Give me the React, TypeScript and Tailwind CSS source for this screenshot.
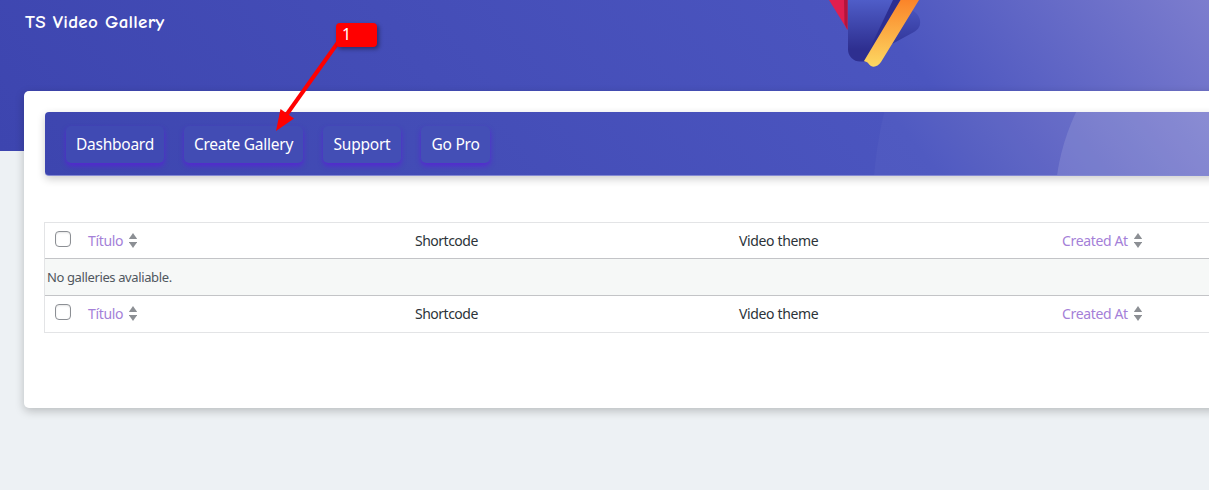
import React, { useState } from 'react';

const navItems = [
  { label: 'Dashboard', width: 'w-[98px]', fill: 'bg-[#404ab3]' },
  { label: 'Create Gallery', width: 'w-[119px]', fill: 'bg-[#424cb4]' },
  { label: 'Support', width: 'w-[78px]', fill: 'bg-[#434eb5]' },
  { label: 'Go Pro', width: 'w-[69px]', fill: 'bg-[#444fb6]' },
];

const SortIcon: React.FC = () => (
  <svg className="ml-[6px] shrink-0" width="8" height="15" viewBox="0 0 8 15" fill="#8c8f94">
    <path d="M4 0L8.200 6H-0.200Z" />
    <path d="M-0.200 9H8.200L4 15Z" />
  </svg>
);

const Logo: React.FC = () => (
  <svg className="absolute left-[820px] top-0" width="110" height="75" viewBox="0 0 110 75">
    <defs>
      <linearGradient id="body" x1="0" y1="0" x2="0" y2="1">
        <stop offset="0" stopColor="#4f5dc8" />
        <stop offset="0.8" stopColor="#2e2f90" />
      </linearGradient>
      <linearGradient id="wing" x1="0" y1="0" x2="0" y2="1">
        <stop offset="0" stopColor="#4853bc" />
        <stop offset="1" stopColor="#32379b" />
      </linearGradient>
      <linearGradient id="bar" x1="0" y1="0" x2="0" y2="1">
        <stop offset="0" stopColor="#fb8429" />
        <stop offset="1" stopColor="#fcd862" />
      </linearGradient>
    </defs>
    <path d="M9 0H27.5V30Z" fill="#e01f4f" />
    <path d="M24 0H27.5V30L24.5 24Z" fill="#b3153c" />
    <path d="M28 0H78L46 61.5H40A12 12 0 0 1 28 49.500Z" fill="url(#body)" />
    <path d="M73 0H82L50 54L52 44Z" fill="#2c2e91" />
    <path d="M72 44L92 10C102 16 103 27 94 32Z" fill="url(#wing)" />
    <path d="M80.500 0H99L61 62C57 68 51 68 48 63C47 61.500 45 62 44 61Z" fill="url(#bar)" />
  </svg>
);

const Callout: React.FC = () => (
  <>
    <svg className="absolute left-[270px] top-[35px]" width="80" height="100" viewBox="0 0 80 100">
      <path d="M69 6L17 79" stroke="#ff0000" strokeWidth="4" />
      <path d="M6 96L10.500 74L24 83.500Z" fill="#ff0000" />
    </svg>
    <div className="absolute left-[336px] top-[23px] h-[24px] w-[41px] rounded-[4px] bg-[#ff0000] pl-[6px] text-[16px] leading-[23px] text-white shadow-[2px_2px_4px_rgba(0,0,0,0.4)]">
      1
    </div>
  </>
);

interface HeadingRowProps {
  checked: boolean;
  onToggle: () => void;
}

const HeadingRow: React.FC<HeadingRowProps> = ({ checked, onToggle }) => (
  <div className="flex h-[35px] items-center text-[14px] text-[#2c3338]">
    <div className="w-[43px] pl-[10px]">
      <input
        type="checkbox"
        className="-mt-[4px] block size-[16px] appearance-none rounded-[4px] border border-[#8c8f94] bg-white shadow-[inset_0_1px_2px_rgba(0,0,0,0.1)] checked:bg-[#6c5ce7]"
        checked={checked}
        onChange={onToggle}
      />
    </div>
    <div className="flex w-[327px] items-center text-[#a480d8]">
      <span className="tracking-[-0.35px]">Título</span>
      <SortIcon />
    </div>
    <div className="w-[324px] tracking-[-0.5px]">Shortcode</div>
    <div className="w-[323px] tracking-[-0.35px]">Video theme</div>
    <div className="flex items-center text-[#a480d8]">
      <span className="tracking-[-0.35px]">Created At</span>
      <SortIcon />
    </div>
  </div>
);

export default function App() {
  const [allChecked, setAllChecked] = useState(false);
  const toggle = () => setAllChecked(!allChecked);

  return (
    <div className="relative h-[490px] w-[1209px] overflow-hidden bg-[#edf1f4] font-['Segoe_UI','Noto_Sans',sans-serif]">
      <div className="h-full bg-[linear-gradient(52deg,#3d45af_0%,#4b55bf_74%,#8080cf_102%)] bg-[length:1209px_151px] bg-no-repeat">
        <header className="h-[91px] pl-[25px] pt-[9px]">
          <h1 className="w-max font-['Comic_Sans_MS','Comic_Neue',cursive] text-[19px] font-bold leading-[26px] tracking-[0.25px] text-white">
            TS Video Gallery
          </h1>
        </header>
        <main className="ml-[24px] h-[317px] w-[1250px] rounded-[5px] bg-white pl-[20px] pt-[21px] shadow-[0_3px_10px_rgba(0,0,0,0.22)]">
          <nav className="relative ml-px flex h-[64px] w-[1210px] items-center gap-[20px] overflow-hidden rounded-[4px] border-b border-[#8489d2] bg-[linear-gradient(52deg,#3d45af_0%,#4b55bf_71%,#8080cf_102%)] pl-[21px] shadow-[0_3px_8px_rgba(0,0,0,0.2)]">
            <svg className="absolute left-0 top-0" width="1210" height="64" viewBox="0 0 1210 64">
              <circle cx="1217" cy="93" r="389" fill="#fff" fillOpacity="0.03" />
              <circle cx="1225" cy="93" r="215" fill="#fff" fillOpacity="0.12" />
            </svg>
            {navItems.map((item) => (
              <a
                key={item.label}
                href="#"
                className={`${item.width} ${item.fill} relative mt-px flex h-[37px] items-center justify-center whitespace-nowrap rounded-[5px] pt-px text-[15.5px] tracking-[-0.25px] text-white shadow-[0_3px_5px_rgba(91,30,218,0.75)]`}
              >
                {item.label}
              </a>
            ))}
          </nav>
          <section className="mt-[46px] h-[111px] w-[1210px] border border-[#e3e4e6]">
            <HeadingRow checked={allChecked} onToggle={toggle} />
            <div className="flex h-[38px] items-center border-y border-[#c3c4c7] bg-[#f6f8f7] pl-[2px] pt-px text-[13px] tracking-[-0.38px] text-[#50575e]">
              No galleries avaliable.
            </div>
            <HeadingRow checked={allChecked} onToggle={toggle} />
          </section>
        </main>
      </div>
      <Logo />
      <Callout />
    </div>
  );
}
